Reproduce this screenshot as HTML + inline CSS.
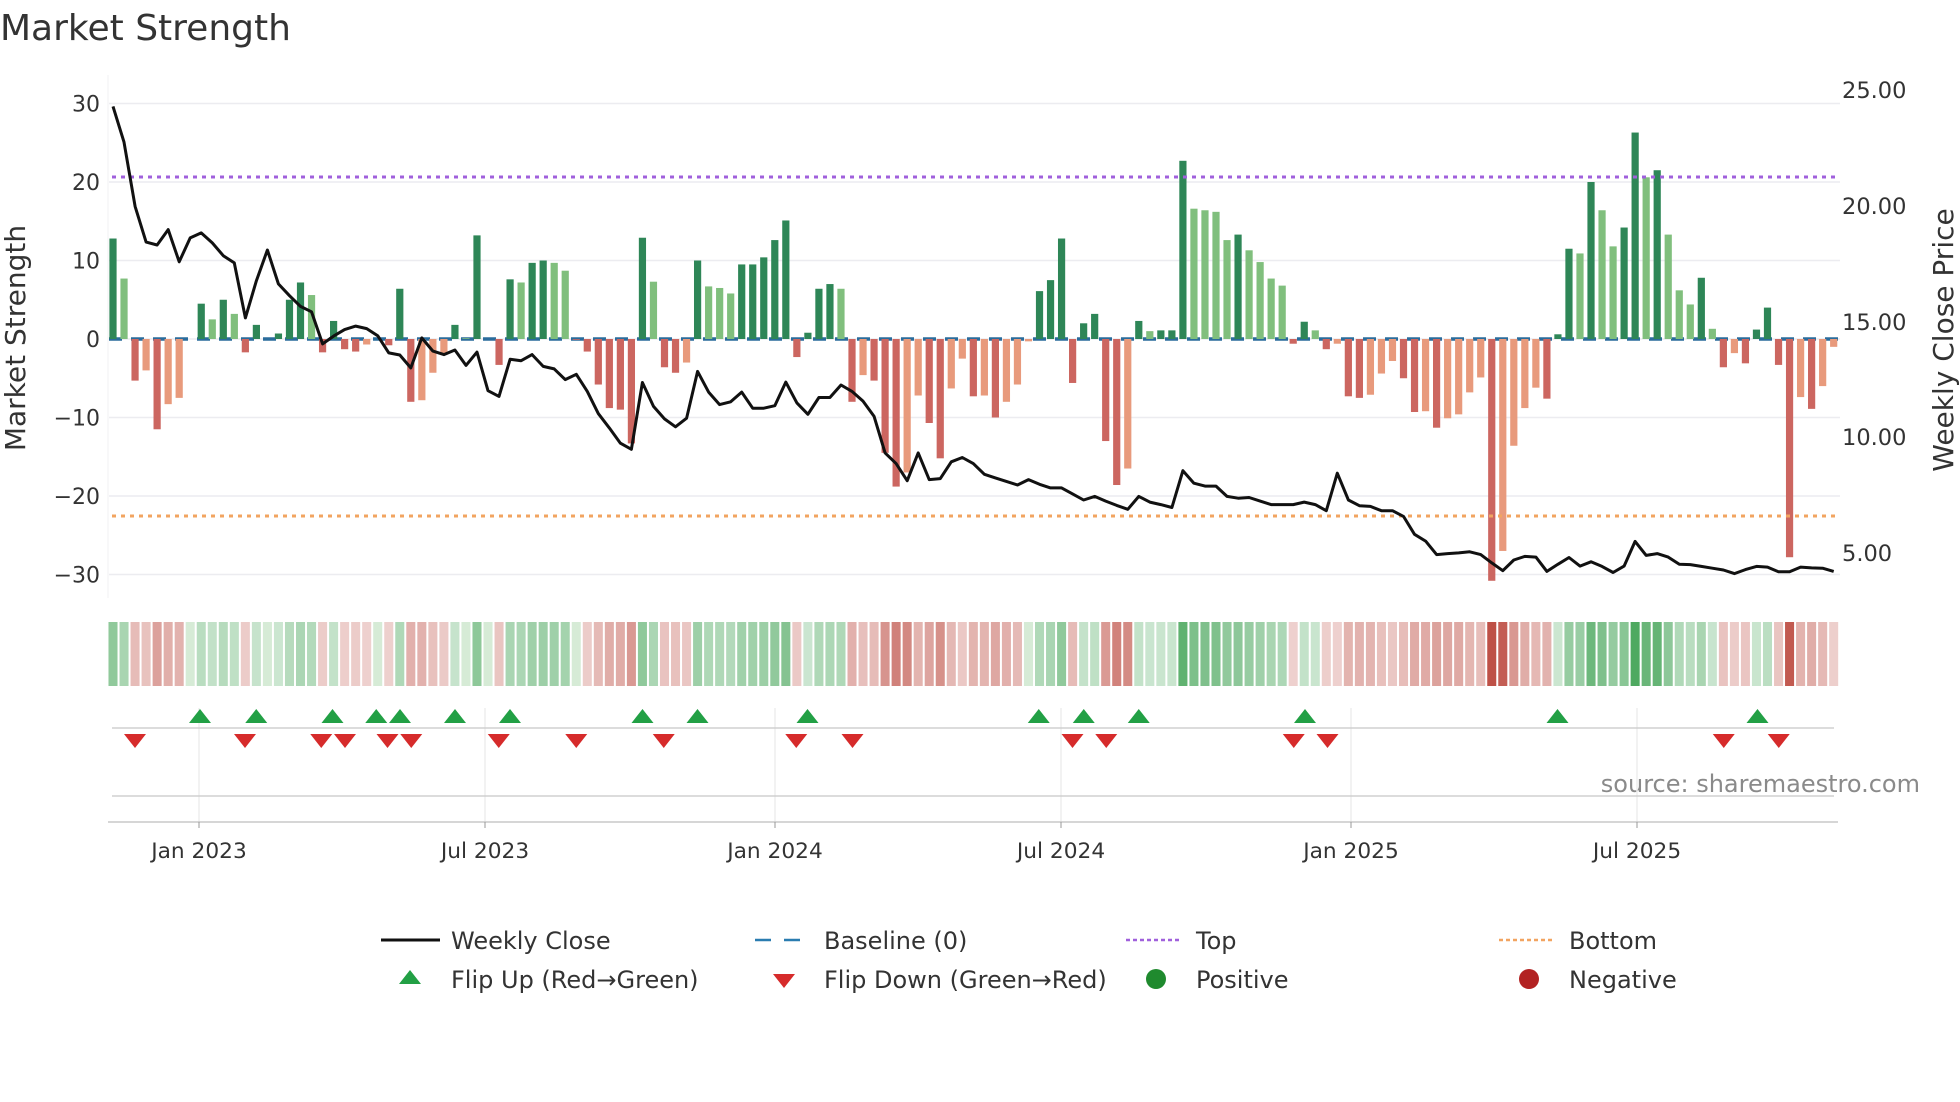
<!DOCTYPE html>
<html><head><meta charset="utf-8"><style>
html,body{margin:0;padding:0;background:#fff;width:1960px;height:1102px;overflow:hidden}
svg{display:block;font-family:"DejaVu Sans","Liberation Sans",sans-serif}
</style></head><body>
<svg id="s" width="1960" height="1102" xmlns="http://www.w3.org/2000/svg">
<text x="0" y="40" font-size="36" fill="#333">Market Strength</text>
<text transform="translate(25,338) rotate(-90)" text-anchor="middle" font-size="28" fill="#333">Market Strength</text>
<text transform="translate(1953,340) rotate(-90)" text-anchor="middle" font-size="28" fill="#333">Weekly Close Price</text>
<text x="1920" y="792" text-anchor="end" font-size="24" fill="#8a8a8a">source: sharemaestro.com</text>
</svg>
<script>
var s=document.getElementById('s'),h='';
var z=339,u=7.85;
function Y(v){return z-v*u}
[30,20,10,0,-10,-20,-30].forEach(function(v){h+='<line x1="109" x2="1840" y1="'+Y(v)+'" y2="'+Y(v)+'" stroke="#ececf0" stroke-width="1.5"/>';
h+='<text x="100" y="'+(Y(v)+8)+'" text-anchor="end" font-size="22" fill="#333">'+(v<0?'\u2212'+(-v):v)+'</text>';});
[[25,90],[20,206],[15,322],[10,437],[5,553]].forEach(function(a){h+='<text x="1842" y="'+(a[1]+8)+'" font-size="22.5" fill="#333">'+a[0].toFixed(2)+'</text>';});
h+='<line x1="108" x2="108" y1="75" y2="598" stroke="#f0f0f3" stroke-width="1"/>';
var A=[12.8,7.7,-5.3,-4,-11.5,-8.3,-7.5,0,4.5,2.5,5,3.2,-1.7,1.8,0,0.7,5,7.2,5.6,-1.7,2.3,-1.3,-1.6,-0.7,0,-0.8,6.4,-8,-7.8,-4.3,-2,1.8,0.1,13.2,0,-3.3,7.6,7.2,9.7,10,9.7,8.7,-0.1,-1.6,-5.8,-8.8,-9,-13.3,12.9,7.3,-3.6,-4.3,-3,10,6.7,6.5,5.8,9.5,9.5,10.4,12.6,15.1,-2.3,0.8,6.4,7,6.4,-8,-4.6,-5.3,-14.5,-18.8,-17,-7.2,-10.7,-15.2,-6.3,-2.5,-7.3,
-7.2,-10,-8,-5.8,-0.3,6.1,7.5,12.8,-5.6,2,3.2,-13,-18.6,-16.5,2.3,1,1.1,1.1,22.7,16.6,16.4,16.2,12.6,13.3,11.3,9.8,7.7,6.8,-0.6,2.2,1.1,-1.3,-0.6,-7.3,-7.5,-7.1,-4.4,-2.8,-5,-9.3,-9.2,-11.3,-10.1,-9.6,-6.8,-4.9,-30.8,-27,-13.6,-8.8,-6.2,-7.6,0.6,11.5,10.9,20,16.4,11.8,14.2,26.3,20.6,21.5,13.3,6.2,4.4,7.8,1.3,-3.6,-1.8,-3.1,1.2,4,-3.3,-27.8,-7.4,-8.9,-6,-1];
var sp=11.03,x0=113;
h+='<line x1="109" x2="1838" y1="'+z+'" y2="'+z+'" stroke="#2a6c9c" stroke-width="3.5" stroke-dasharray="13,9"/>';
for(var i=0;i<A.length;i++){var v=A[i],x=x0+sp*i,prev=i?A[i-1]:0,c;
 if(v>=0)c=(v>=prev&&v>0.2)?'#2e8657':'#80bf7d';else c=(v<=prev)?'#cc6660':'#e89a7c';
 if(Math.abs(v)>0.05)h+='<rect x="'+(x-3.6)+'" y="'+Math.min(Y(v),z)+'" width="7.2" height="'+Math.abs(v*u)+'" fill="'+c+'"/>';
 var a=Math.min(0.25+Math.abs(v)/30*0.75,1);
 var col=v>=0?'rgba(60,160,80,'+a+')':'rgba(190,80,70,'+a+')';
 if(Math.abs(v)<0.5)col='rgba(120,190,120,0.3)';
 h+='<rect x="'+(x-sp/2+1)+'" y="622" width="'+(sp-2)+'" height="64" fill="'+col+'"/>';}
h+='<line x1="112" x2="1835" y1="177" y2="177" stroke="#a060dc" stroke-width="3" stroke-dasharray="4,5"/>';
h+='<line x1="112" x2="1835" y1="516" y2="516" stroke="#f2a460" stroke-width="3" stroke-dasharray="4,5"/>';
var L1=[130,230,410,510,518,475,565,498,484,512,548,568,722,618,532,627,660,690,705,795,773,755,745,752,772,820,826,862,778,815,825,812,855,818,926,942,838,842,825,858,865,895,880,928,990,1030,1073,1090,903,970,1005,1027,1003,872,930,965,957,930,975,975,968,902,960,992,945,945,910,928,955,998,1100,1130,1178,1100,1175,1172,1125,1113,1130];
var L2=[1160,1170,1180,1190,1175,1188,1198,1198,1215,1232,1222,1235,1247,1258,1222,1238,1245,1253,1150,1185,1193,1193,1222,1227,1225,1235,1245,1245,1245,1238,1245,1262,1157,1232,1248,1250,1262,1262,1278,1328,1347,1385,1382,1380,1377,1385,1408,1430,1400,1390,1392,1432,1412,1393,1417,1405,1418,1435,1417,1348,1387,1382,1392,1412,1413,1418,1423,1428,1438,1427,1418,1420,1433,1433,1420,1422,1423,1432];
var L=L1.concat(L2),p='';
for(i=0;i<L.length;i++){p+=(i?'L':'M')+(x0+sp*i).toFixed(1)+','+(60+L[i]/2.8).toFixed(1);}
h+='<path d="'+p+'" fill="none" stroke="#111" stroke-width="3" stroke-linejoin="round"/>';
[199,485,775,1061,1351,1637].forEach(function(x){h+='<line x1="'+x+'" x2="'+x+'" y1="708" y2="822" stroke="#eeeeee" stroke-width="1.5"/>';});
h+='<line x1="112" x2="1834" y1="728" y2="728" stroke="#d0d0d0" stroke-width="1.5"/>';
h+='<line x1="112" x2="1834" y1="796" y2="796" stroke="#d0d0d0" stroke-width="1.5"/>';
h+='<line x1="108" x2="1838" y1="822" y2="822" stroke="#c8c8c8" stroke-width="1.5"/>';
[['Jan 2023',199],['Jul 2023',485],['Jan 2024',775],['Jul 2024',1061],['Jan 2025',1351],['Jul 2025',1637]].forEach(function(a){
h+='<line x1="'+a[1]+'" x2="'+a[1]+'" y1="822" y2="828" stroke="#999"/>';
h+='<text x="'+a[1]+'" y="858" text-anchor="middle" font-size="21.7" fill="#333">'+a[0]+'</text>';});
function up(x,y,c){return '<path d="M'+(x-11)+','+(y+7)+'L'+x+','+(y-7)+'L'+(x+11)+','+(y+7)+'Z" fill="'+c+'"/>';}
function dn(x,y,c){return '<path d="M'+(x-11)+','+(y-7)+'L'+x+','+(y+7)+'L'+(x+11)+','+(y-7)+'Z" fill="'+c+'"/>';}
[160,205,266,301,320,364,408,514,558,646,831,867,911,1044,1246,1406].forEach(function(x){h+=up(x*1.25,716,'#22a045');});
[108,196,257,276,310,329,399,461,531,637,682,858,885,1035,1062,1379,1423].forEach(function(x){h+=dn(x*1.25,741,'#d62b2b');});
var fs=24;
h+='<line x1="381" x2="440" y1="940" y2="940" stroke="#111" stroke-width="3"/><text x="451" y="949" font-size="'+fs+'" fill="#333">Weekly Close</text>';
h+='<line x1="755" x2="807" y1="940" y2="940" stroke="#2a7cb0" stroke-width="2.5" stroke-dasharray="16,13"/><text x="824" y="949" font-size="'+fs+'" fill="#333">Baseline (0)</text>';
h+='<line x1="1126" x2="1181" y1="940" y2="940" stroke="#a060dc" stroke-width="2.5" stroke-dasharray="4,3"/><text x="1196" y="949" font-size="'+fs+'" fill="#333">Top</text>';
h+='<line x1="1499" x2="1554" y1="940" y2="940" stroke="#f2a460" stroke-width="2.5" stroke-dasharray="4,3"/><text x="1569" y="949" font-size="'+fs+'" fill="#333">Bottom</text>';
h+=up(410,977,'#22a045')+'<text x="451" y="988" font-size="'+fs+'" fill="#333">Flip Up (Red\u2192Green)</text>';
h+=dn(784,981,'#d62b2b')+'<text x="824" y="988" font-size="'+fs+'" fill="#333">Flip Down (Green\u2192Red)</text>';
h+='<circle cx="1156" cy="979" r="10" fill="#1f8a2e"/><text x="1196" y="988" font-size="'+fs+'" fill="#333">Positive</text>';
h+='<circle cx="1529" cy="979" r="10" fill="#b22222"/><text x="1569" y="988" font-size="'+fs+'" fill="#333">Negative</text>';
s.insertAdjacentHTML('beforeend',h);
</script>
</body></html>
